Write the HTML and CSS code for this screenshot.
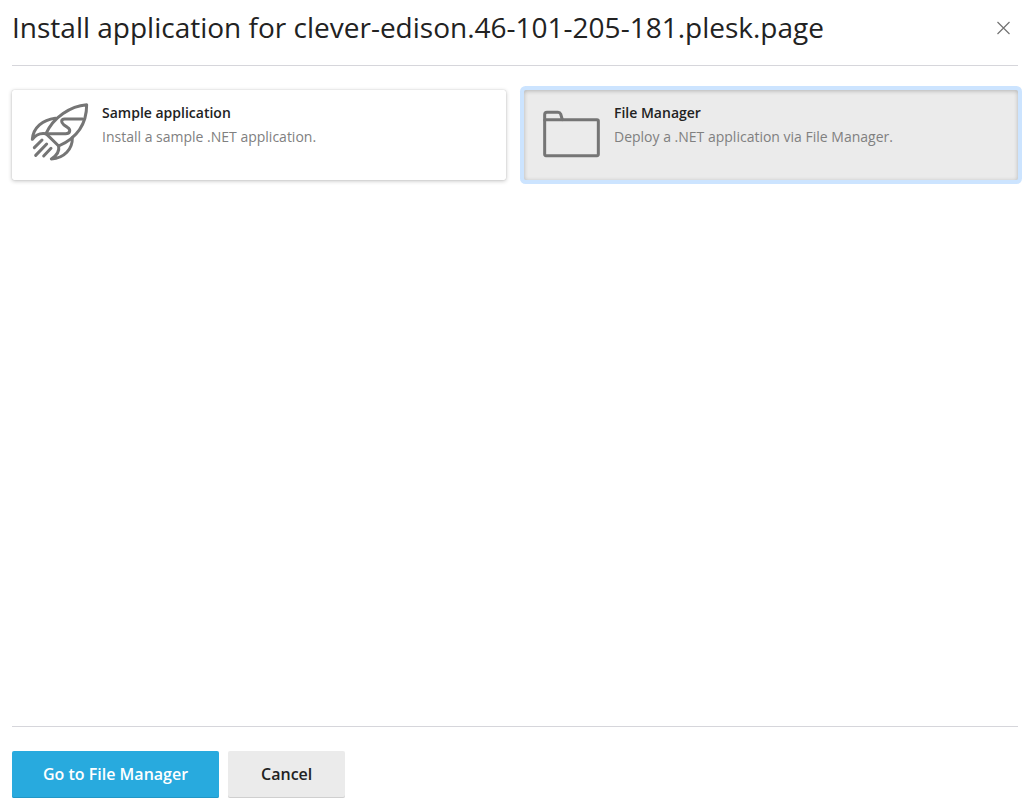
FILE: index.html
```html
<!DOCTYPE html>
<html lang="en">
<head>
<meta charset="utf-8">
<meta name="viewport" content="width=device-width, initial-scale=1">
<title>Install application</title>
<link rel="stylesheet" href="styles.css">
</head>
<body>
<main class="dialog">
  <header class="dialog-header">
    <h1 class="dialog-title">Install application for clever-edison.46-101-205-181.plesk.page</h1>
    <button class="close" type="button" aria-label="Close">
      <svg viewBox="0 0 14 14" width="14" height="14" aria-hidden="true"><path d="M1.500 1l12 12M13.500 1l-12 12"/></svg>
    </button>
  </header>
  <div class="options">
    <button class="card" type="button" aria-pressed="false">
      <svg class="card-icon" viewBox="0 0 180 180" aria-hidden="true">
        <path d="M170 8C122 12 70 45 48 95L86 132C135 110 170 70 170 8Z"/>
        <path d="M76 49C38 54 10 76 7 112C17 98 31 92 48 95"/>
        <path d="M127 107C128 141 103 169 64 171C80 161 89 149 86 132"/>
        <path d="M158 51H104C92 52 93 61 101 68L112 76C124 84 120 95 107 95H48"/>
        <path d="M13 137L36 114M17 160L50 126M41 162L63 139"/>
      </svg>
      <span class="card-text">
        <span class="card-title">Sample application</span>
        <span class="card-note">Install a sample .NET application.</span>
      </span>
    </button>
    <button class="card card-selected" type="button" aria-pressed="true">
      <svg class="card-icon" viewBox="0 0 180 180" aria-hidden="true">
        <path d="M8 54V38Q8 31 15 31H48Q54 31 56 36L61 53"/>
        <rect x="8" y="53" width="161" height="108" rx="4"/>
      </svg>
      <span class="card-text">
        <span class="card-title">File Manager</span>
        <span class="card-note">Deploy a .NET application via File Manager.</span>
      </span>
    </button>
  </div>
  <footer class="dialog-footer">
    <button class="btn btn-primary" type="button">Go to File Manager</button>
    <button class="btn" type="button">Cancel</button>
  </footer>
</main>
</body>
</html>
```

FILE: styles.css
```css
* {
  box-sizing: border-box;
}

body {
  margin: 0;
  background: #fff;
  color: #222;
  font-family: "Open Sans", "Noto Sans", sans-serif;
}

button {
  border: 0;
  font: inherit;
  color: inherit;
  cursor: pointer;
}

.dialog {
  display: flex;
  flex-direction: column;
  min-height: 100vh;
  padding: 0 6px 0 12px;
}

.dialog-header {
  display: flex;
  align-items: center;
  justify-content: space-between;
  padding: 8px 0 18px;
  border-bottom: 1px solid #d6d6db;
}

.dialog-title {
  margin: 0;
  font-size: 28px;
  font-weight: 400;
  line-height: 39px;
}

.close {
  display: flex;
  padding: 8px;
  background: none;
}

.close svg {
  fill: none;
  stroke: #737373;
  stroke-width: 1.2;
}

.options {
  display: grid;
  grid-template-columns: 1fr 1fr;
  gap: 18px;
  flex: 1;
  align-content: start;
  padding: 24px 0;
}

.card {
  display: flex;
  align-items: flex-start;
  gap: 12px;
  min-height: 90px;
  padding: 12px 18px;
  border-radius: 2px;
  background: #fff;
  box-shadow: 0 0 1px rgba(0, 0, 0, 0.25), 0 1px 4px rgba(0, 0, 0, 0.24);
  text-align: left;
}

.card-selected {
  background: #ebebeb;
  box-shadow: inset 0 1px 4px rgba(0, 0, 0, 0.24), 0 0 0 4px #cce4ff;
}

.card-icon {
  flex: none;
  width: 60px;
  height: 60px;
  fill: none;
  stroke: #757575;
  stroke-width: 9;
  stroke-linecap: round;
  stroke-linejoin: round;
}

.card-text {
  display: flex;
  flex-direction: column;
}

.card-title,
.card-note {
  font-size: 14px;
}

.card-title {
  font-weight: 600;
  line-height: 22px;
}

.card-note {
  color: #808080;
  line-height: 26px;
}

.dialog-footer {
  display: flex;
  gap: 9px;
  padding: 24px 0 12px;
  border-top: 1px solid #d6d6db;
}

.btn {
  padding: 12px 33px;
  border-radius: 2px;
  background: #ebebeb;
  box-shadow: inset 0 -1px 0 #cfcfcf;
  font-size: 16px;
  font-weight: 600;
  line-height: 23px;
}

.btn-primary {
  padding: 12px 31px;
  background: #28aade;
  box-shadow: inset 0 -1px 0 #2297c6;
  color: #fff;
}
```
